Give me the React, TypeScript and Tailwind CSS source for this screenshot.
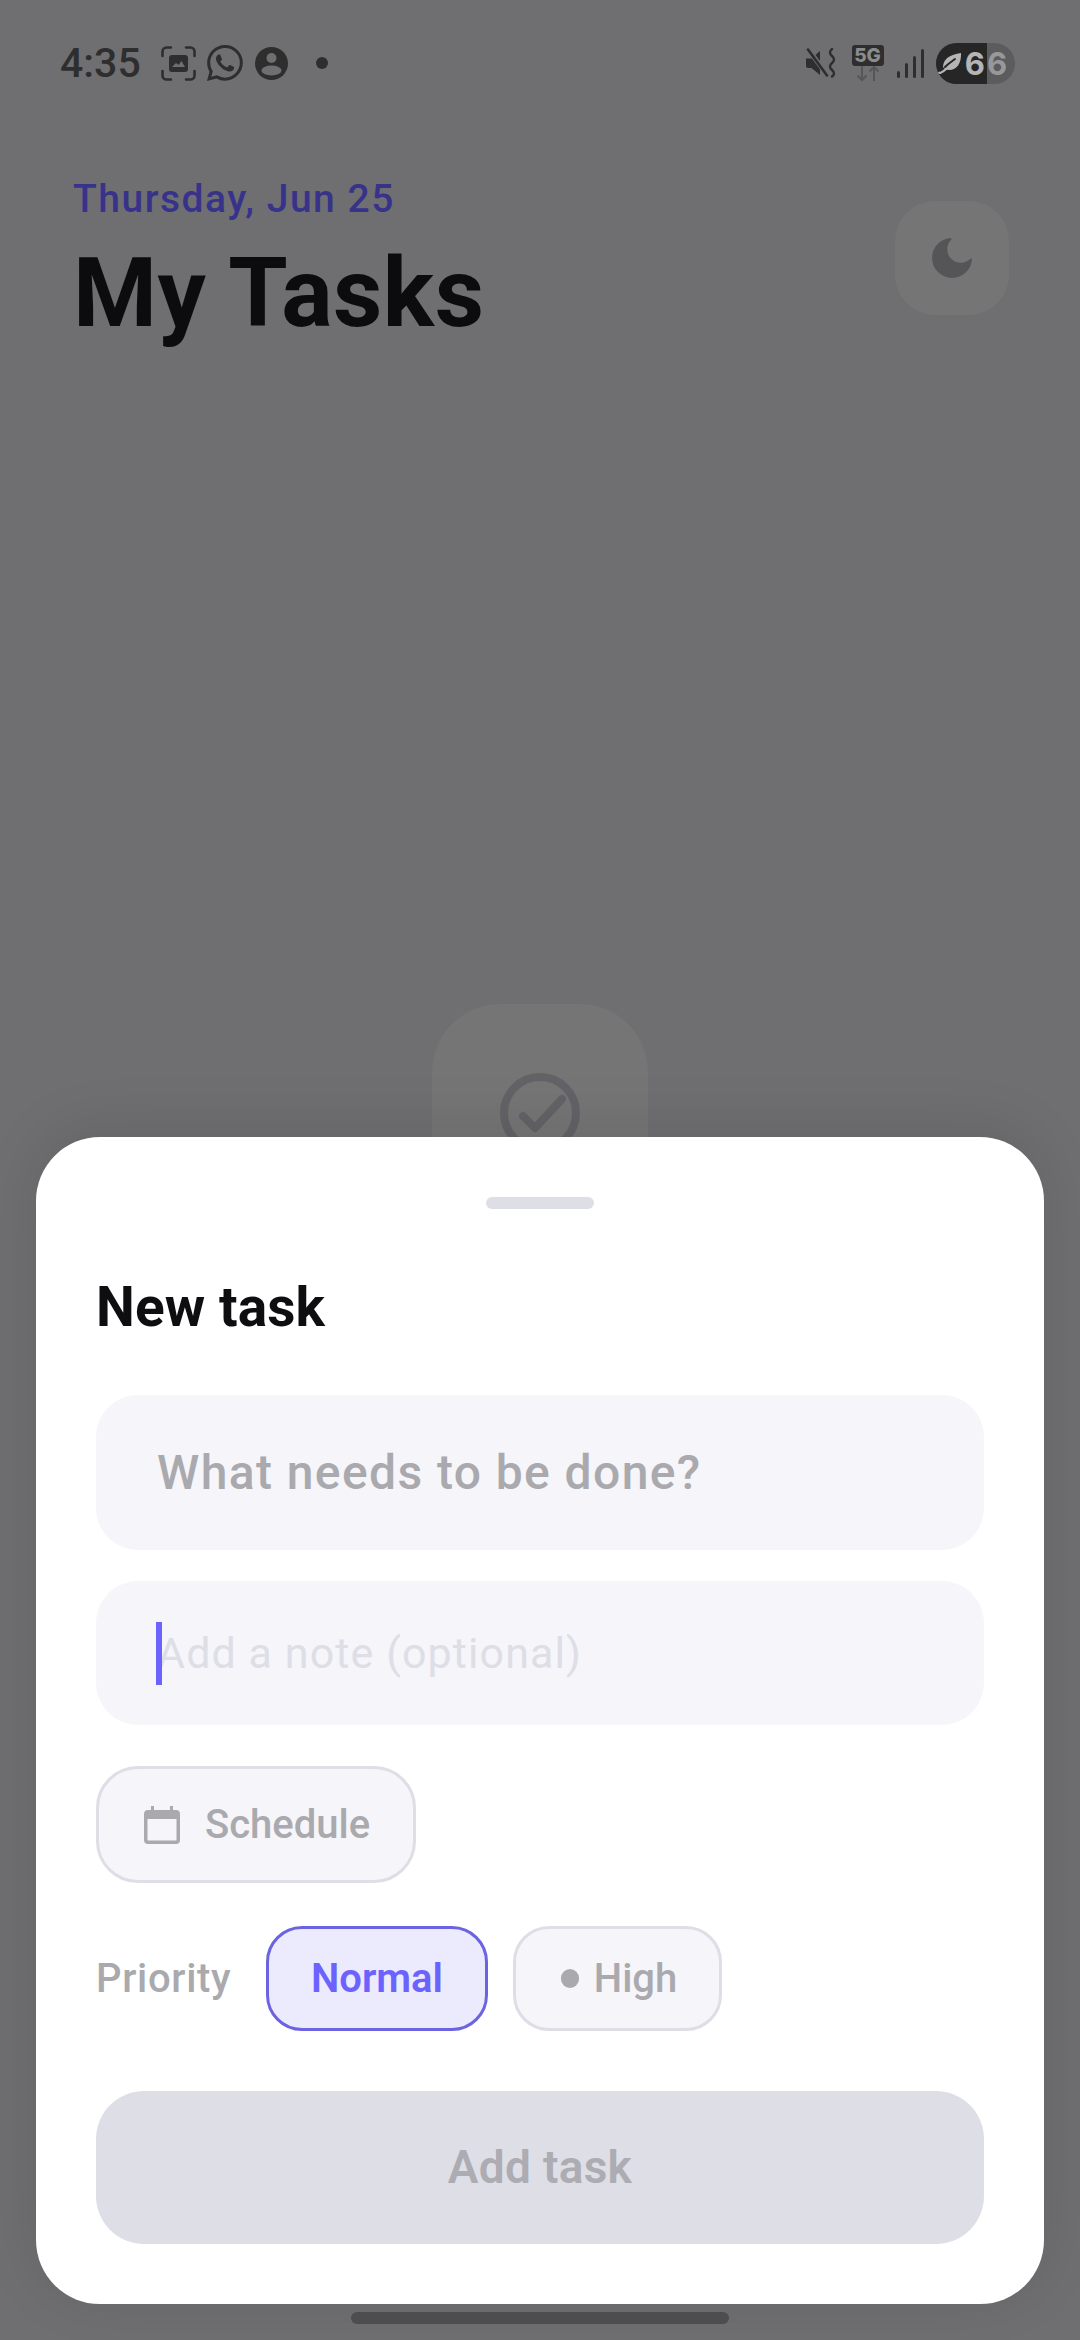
import { BsWhatsapp } from 'react-icons/bs';

const font = { fontFamily: 'Roboto, sans-serif' };

function ScanImageIcon() {
  return (
    <svg width="35" height="35" viewBox="0 0 35 35" fill="none" stroke="#2e2e2e" strokeWidth="2.6" strokeLinecap="round">
      <path d="M1.500 10V5.500a4 4 0 0 1 4-4H10M25 1.500h4.500a4 4 0 0 1 4 4V10M33.500 25v4.500a4 4 0 0 1-4 4H25M10 33.500H5.500a4 4 0 0 1-4-4V25" />
      <rect x="8" y="9" width="19" height="17" rx="3" fill="#2e2e2e" stroke="none" />
      <path d="M11 21l4-4 2.500 2 3-4 3.500 6z" fill="#6f6f71" stroke="none" />
    </svg>
  );
}

function PersonIcon() {
  return (
    <svg width="33" height="33" viewBox="0 0 33 33">
      <circle cx="16.500" cy="16.500" r="16.500" fill="#2e2e2e" />
      <circle cx="16.500" cy="11" r="5" fill="#6f6f71" />
      <ellipse cx="16.500" cy="23.500" rx="10" ry="5" fill="#6f6f71" />
    </svg>
  );
}

function MuteVibrateIcon() {
  return (
    <svg width="30" height="30" viewBox="0 0 30 30" fill="none">
      <path d="M0 10.500h5.500L14 3v24l-8.500-7H2a2 2 0 0 1-2-2z" fill="#2e2e2e" />
      <path d="M2 1l20 27" stroke="#6f6f71" strokeWidth="5" />
      <path d="M2 1.500l19 26" stroke="#2e2e2e" strokeWidth="2.600" strokeLinecap="round" />
      <path d="M26 1q-4 3.500 0 7t0 7 0 7 0 6.500" stroke="#2e2e2e" strokeWidth="2.400" strokeLinecap="round" />
    </svg>
  );
}

function NetworkIcon() {
  return (
    <div className="flex w-8 flex-col items-center">
      <div className="flex h-[21px] w-8 items-center justify-center rounded-[3px] bg-[#2e2e2e] text-[19px] font-extrabold leading-none text-[#8b8b8d]" style={{ fontFamily: 'Inter, sans-serif' }}>5G</div>
      <svg width="24" height="16" viewBox="0 0 24 16" fill="none" stroke="#565658" strokeWidth="2">
        <path d="M6 0v14M1.500 9.500L6 14l4.500-4.500" />
        <path d="M18 15V1M13.500 5.500L18 1l4.500 4.500" />
      </svg>
    </div>
  );
}

function SignalBars() {
  return (
    <div className="flex h-[29px] items-end gap-[4.500px]">
      <div className="h-[7px] w-[3.500px] rounded-full bg-[#2e2e2e]" />
      <div className="h-[15px] w-[3.500px] rounded-full bg-[#2e2e2e]" />
      <div className="h-[22px] w-[3.500px] rounded-full bg-[#2e2e2e]" />
      <div className="h-[29px] w-[3.500px] rounded-full bg-[#2e2e2e]" />
    </div>
  );
}

function Battery() {
  return (
    <div className="flex h-[41px] w-[79px] overflow-hidden rounded-full bg-[#5c5c5e] text-[31px] font-bold leading-none" style={{ fontFamily: 'Inter, sans-serif' }}>
      <div className="flex w-[51px] items-center justify-end bg-[#262626] pr-[2px] text-[#b5b5b5]">
        <svg width="24" height="21" viewBox="0 0 24 21" className="mr-[3px]" fill="none">
          <path d="M5 14C5 6 12 1.500 23 0c.500 10-4 17-12 17-2 0-4.500-1-6-3z" fill="#b5b5b5" />
          <path d="M7 14c3-3 6-5 10-8" stroke="#262626" strokeWidth="2" strokeLinecap="round" />
          <path d="M1 20c3 0 5-2 7-4" stroke="#b5b5b5" strokeWidth="2.400" strokeLinecap="round" />
        </svg>
        <span>6</span>
      </div>
      <span className="flex items-center text-[#98989a]">6</span>
    </div>
  );
}

function StatusBar() {
  return (
    <div className="flex h-[126px] items-center justify-between pl-[60px] pr-[65px]">
      <div className="flex items-center">
        <span className="text-[41px] font-medium leading-none text-[#2e2e2e]">4:35</span>
        <span className="ml-[20px] flex"><ScanImageIcon /></span>
        <BsWhatsapp className="ml-[11px] text-[36px] text-[#2e2e2e]" />
        <span className="ml-[12px] flex"><PersonIcon /></span>
        <span className="ml-[28px] h-3 w-3 rounded-full bg-[#2e2e2e]" />
      </div>
      <div className="flex items-center">
        <MuteVibrateIcon />
        <span className="ml-4"><NetworkIcon /></span>
        <span className="ml-[13px]"><SignalBars /></span>
        <span className="ml-3"><Battery /></span>
      </div>
    </div>
  );
}

function Pill({ children, active }: { children: React.ReactNode; active?: boolean }) {
  return (
    <div
      className={
        active
          ? 'flex h-[105px] w-[222px] items-center justify-center rounded-[36px] border-[3px] border-[#6c63e0] bg-[#eceafd] text-[40px] font-semibold text-[#6c63ff]'
          : 'flex h-[105px] w-[209px] items-center justify-center rounded-[36px] border-[3px] border-[#dedee6] bg-[#f5f5fa] text-[40px] font-medium text-[#a9a9ae]'
      }
    >
      {children}
    </div>
  );
}

function NewTaskSheet() {
  return (
    <div className="absolute inset-x-9 bottom-9 rounded-[64px] bg-white p-[60px] shadow-[0_-8px_60px_rgba(0,0,0,0.10)]">
      <div className="mx-auto h-3 w-[108px] rounded-full bg-[#dedee6]" />
      <h2 className="mt-[66px] text-[55px] font-bold leading-[64px] tracking-[0.1px] text-[#0e0e11]">New task</h2>

      <div className="mt-[56px] flex h-[155px] items-center rounded-[42px] bg-[#f5f5fa] px-[61px] text-[48px] font-medium tracking-[1.400px] text-[#a9a9ae]">
        What needs to be done?
      </div>

      <div className="relative mt-[31px] flex h-[144px] items-center rounded-[42px] bg-[#f5f5fa] px-[61px] text-[43px] tracking-[1.100px] text-[#dedee6]">
        <span className="absolute left-[60px] top-[41px] h-[63px] w-1.5 bg-[#6c63ff]" />
        Add a note (optional)
      </div>

      <div className="mt-[41px] flex h-[117px] w-[320px] items-center rounded-[42px] border-[3px] border-[#dedee6] bg-[#f5f5fa] pl-[45px] text-[40px] font-medium text-[#a9a9ae]">
        <svg width="36" height="38" viewBox="0 0 36 38" fill="#a9a9ae">
          <path d="M7 0h3v4h16V0h3v4h3a4 4 0 0 1 4 4v26a4 4 0 0 1-4 4H4a4 4 0 0 1-4-4V8a4 4 0 0 1 4-4h3zM3.500 13v21c0 .300.200.500.500.500h28c.300 0 .500-.200.500-.500V13z" />
        </svg>
        <span className="ml-[25px]">Schedule</span>
      </div>

      <div className="mt-[43px] flex items-center">
        <span className="w-[170px] text-[40px] font-medium tracking-[0.7px] text-[#a9a9ae]">Priority</span>
        <Pill active>Normal</Pill>
        <span className="ml-[25px]">
          <Pill>
            <span className="ml-[3px] h-[19px] w-[18px] rounded-full bg-[#a9a9ae]" />
            <span className="ml-[15px]">High</span>
          </Pill>
        </span>
      </div>

      <div className="mt-[60px] flex h-[153px] items-center justify-center rounded-[48px] bg-[#dedee6] text-[46px] font-semibold tracking-[0.3px] text-[#acacb2]">
        Add task
      </div>
    </div>
  );
}

export default function App() {
  return (
    <div className="relative h-[2340px] w-[1080px] overflow-hidden bg-[#6f6f71]" style={font}>
      <StatusBar />

      <div className="flex items-start justify-between pl-[73px] pr-[71px] pt-[51px]">
        <div>
          <div className="text-[39px] font-medium leading-[44px] tracking-[1.500px] text-[#38338a]">Thursday, Jun 25</div>
          <h1 className="mt-[17px] text-[96px] font-bold leading-[110px] tracking-[0.5px] text-[#0c0c0e]">My Tasks</h1>
        </div>
        <div className="mt-[24px] flex h-[114px] w-[114px] items-center justify-center rounded-[40px] bg-[#757576]">
          <svg width="40" height="40" viewBox="0 0 40 40" fill="#555558" stroke="#555558" strokeWidth="2" strokeLinejoin="round">
            <path d="M18.500 1A19 19 0 1 0 39 21.500A12.500 12.500 0 0 1 18.500 1z" />
          </svg>
        </div>
      </div>

      <div className="mx-auto mt-[656px] flex h-[216px] w-[216px] justify-center rounded-[68px] bg-[#757576] pt-[69px]">
        <svg width="80" height="80" viewBox="0 0 80 80" fill="none" stroke="#636367" strokeWidth="8" strokeLinecap="round" strokeLinejoin="round">
          <circle cx="40" cy="40" r="36" />
          <path d="M23 43l12 12 27-29" />
        </svg>
      </div>

      <NewTaskSheet />

      <div className="absolute bottom-4 left-[351px] h-3 w-[378px] rounded-full bg-[#4d4d4f]" />
    </div>
  );
}
